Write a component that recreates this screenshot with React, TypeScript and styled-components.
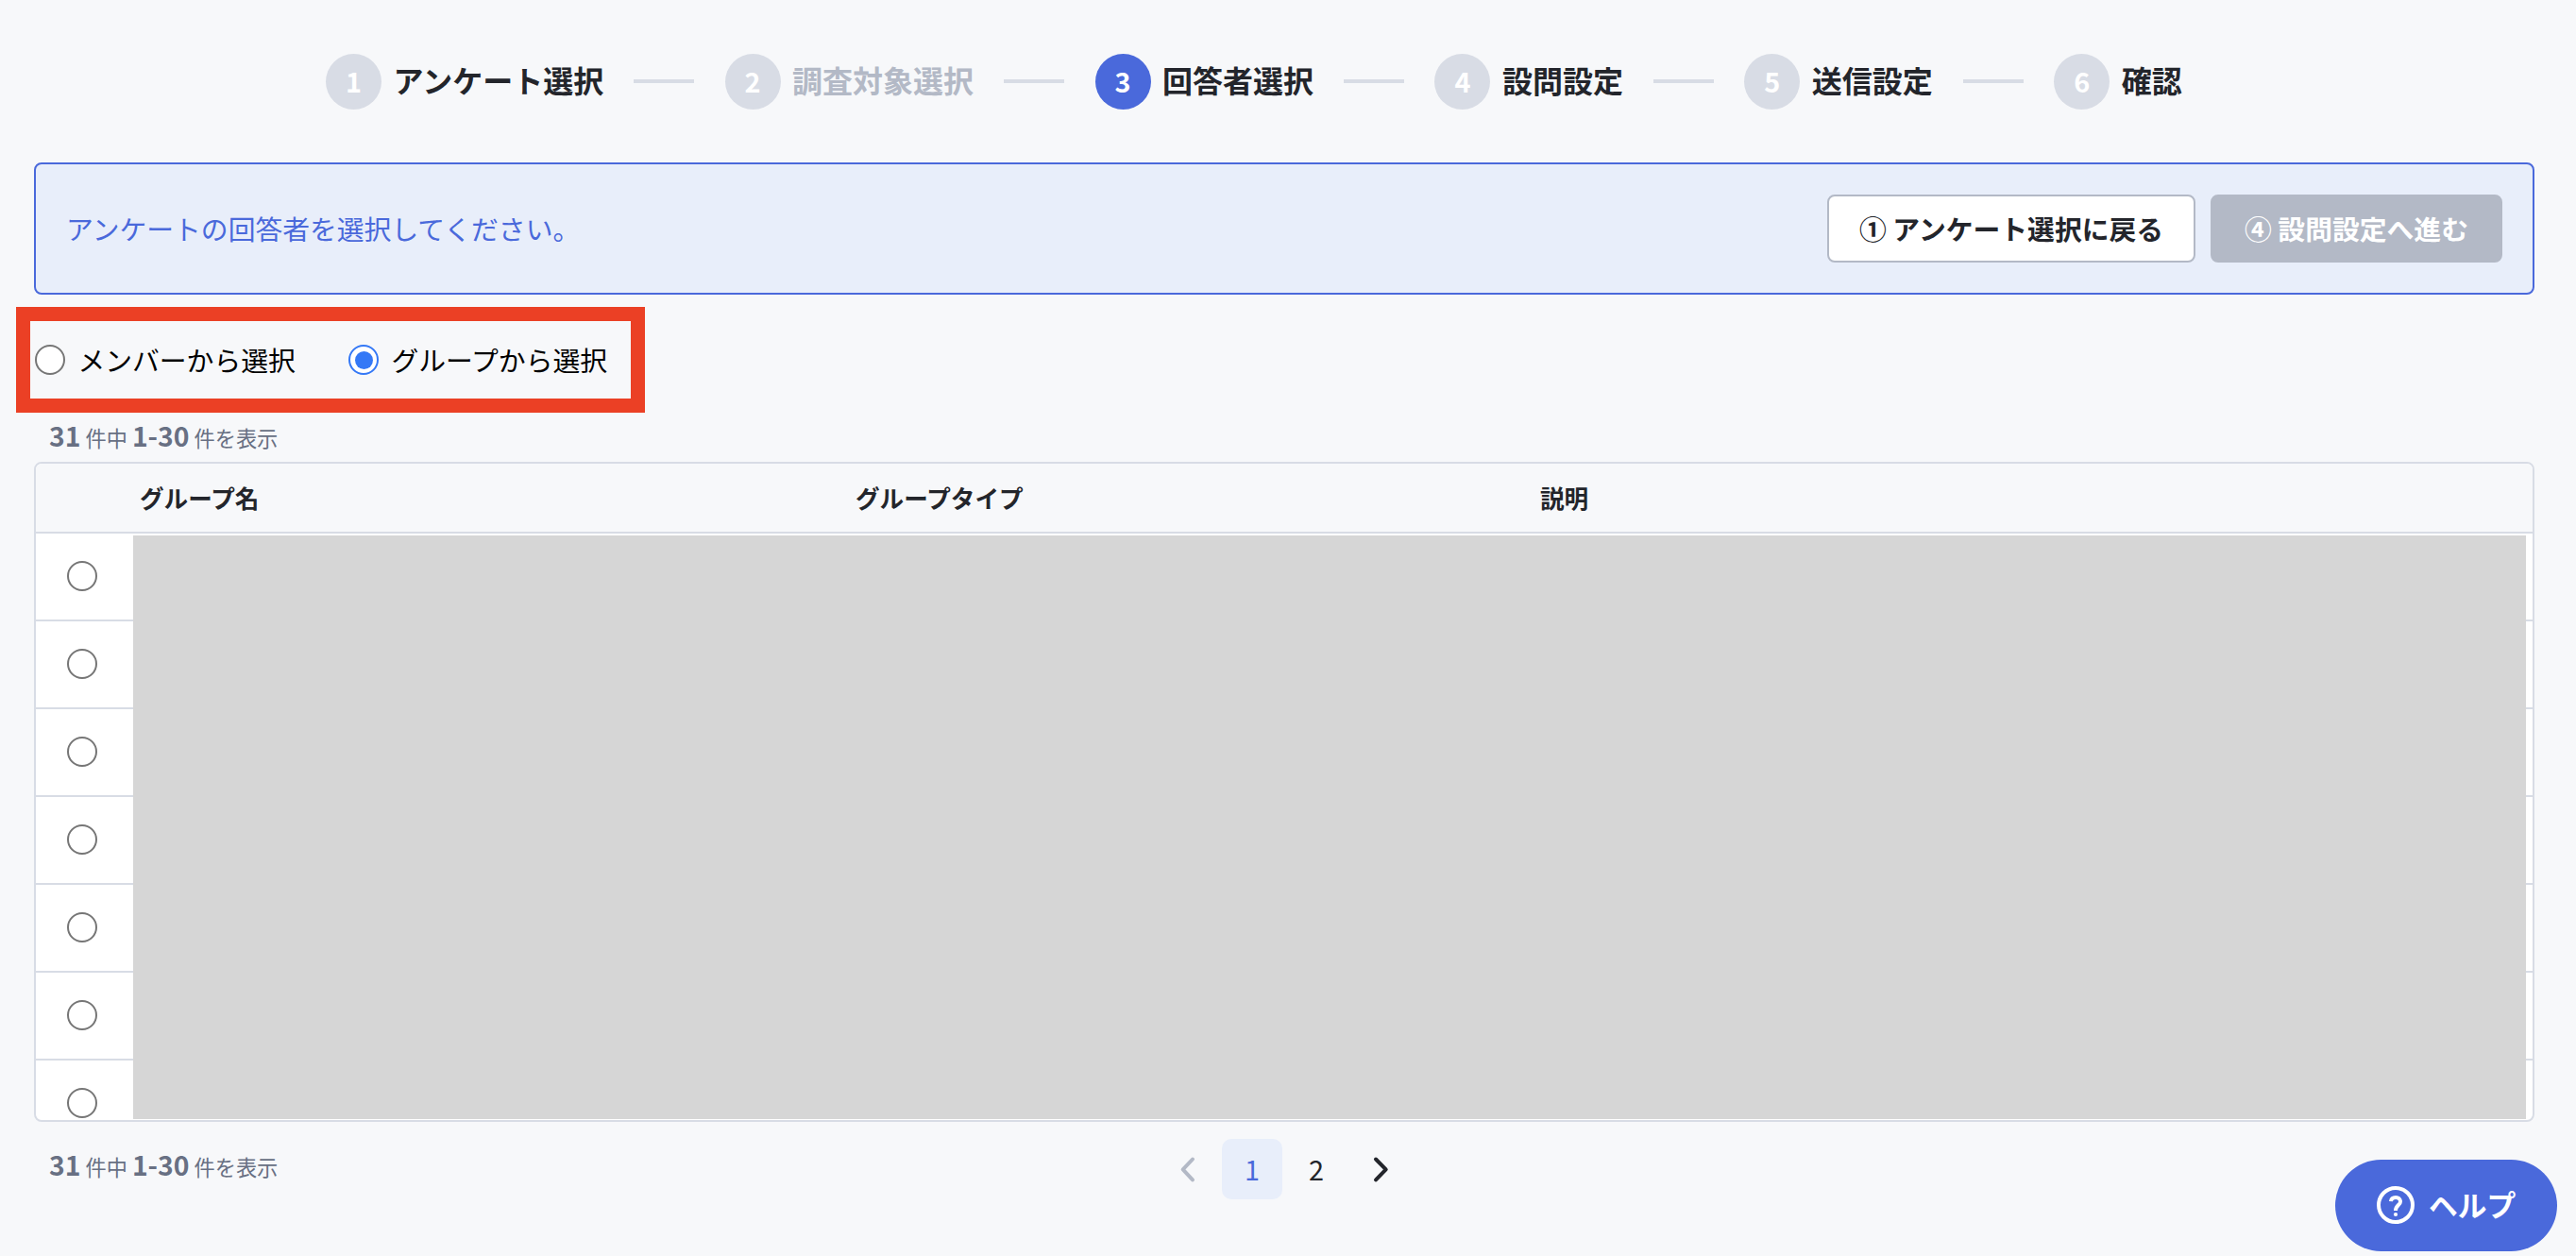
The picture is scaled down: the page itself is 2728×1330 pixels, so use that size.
import React, { useState } from 'react';
import styled, { createGlobalStyle } from 'styled-components';

const color = {
  page: '#f7f8fa',
  line: '#d8dce5',
  blue: '#4a69db',
  paleBlue: '#e8eefa',
  ink: '#23252b',
  muted: '#b3b9c6',
  count: '#687083',
};

const GlobalStyle = createGlobalStyle`
  *, *::before, *::after { box-sizing: border-box; }
  body {
    margin: 0;
    background: ${color.page};
    color: ${color.ink};
    font-family: 'Noto Sans CJK JP', 'Noto Sans', sans-serif;
    font-size: 28.8px;
  }
`;

const Page = styled.main`
  position: relative;
  height: 1330px;
  padding: 57px 44px 0 36px;
  overflow: hidden;
`;

const Steps = styled.ol`
  display: flex;
  align-items: center;
  list-style: none;
  margin: 0 0 56px;
  padding: 0 0 0 309px;
  height: 59px;
`;

const Step = styled.li<{ $dim?: boolean }>`
  display: flex;
  align-items: center;
  font-size: 32px;
  font-weight: 700;
  line-height: 54px;
  white-space: nowrap;
  color: ${(p) => (p.$dim ? color.muted : color.ink)};

  &:not(:first-child)::before {
    content: '';
    width: 64px;
    height: 4px;
    margin: -1px 32.2px 0 32.2px;
    background: ${color.line};
  }
`;

const StepNumber = styled.span<{ $active?: boolean }>`
  width: 59px;
  height: 59px;
  margin-right: 12.5px;
  border-radius: 50%;
  background: ${(p) => (p.$active ? color.blue : color.line)};
  color: #fff;
  font-size: 28.8px;
  line-height: 58px;
  text-align: center;
`;

const StepLabel = styled.span`
  padding-bottom: 5px;
`;

const Banner = styled.section`
  display: flex;
  align-items: center;
  gap: 16px;
  height: 140px;
  padding: 0 32px;
  border: 2px solid ${color.blue};
  border-radius: 8px;
  background: ${color.paleBlue};
`;

const Message = styled.p`
  flex: 1;
  margin: 0;
  padding-bottom: 2px;
  color: ${color.blue};
`;

const Button = styled.button<{ $width: number }>`
  width: ${(p) => p.$width}px;
  height: 72px;
  padding: 0 0 2px;
  border: 2px solid ${color.muted};
  border-radius: 8px;
  background: #fff;
  color: ${color.ink};
  font: inherit;
  font-weight: 700;
  white-space: nowrap;

  &:disabled {
    background: ${color.muted};
    color: #fff;
  }
`;

const Choices = styled.div`
  display: flex;
  align-items: center;
  gap: 56.6px;
  width: 666px;
  height: 112px;
  margin: 13px 0 0 -19px;
  padding-left: 5.4px;
  border: 15px solid #eb4025;
  color: #000;
`;

const Choice = styled.label`
  display: flex;
  align-items: center;
  gap: 13px;
  white-space: nowrap;
`;

const ChoiceText = styled.span`
  padding-bottom: 1px;
`;

const Radio = styled.input.attrs({ type: 'radio' })`
  appearance: none;
  flex: none;
  display: grid;
  place-items: center;
  width: 32px;
  height: 32px;
  margin: 0;
  border: 2px solid #767676;
  border-radius: 50%;
  background: #fff;

  &:checked { border-color: #3478f6; }
  &:checked::before {
    content: '';
    width: 19px;
    height: 19px;
    border-radius: 50%;
    background: #3478f6;
  }
`;

const Count = styled.p`
  display: flex;
  align-items: baseline;
  margin: 0;
  padding-left: 16px;
  height: 52px;
  line-height: 47px;
  font-size: 22.2px;
  word-spacing: 0.1px;
  color: ${color.count};
  white-space: pre;

  b { font-size: 28.3px; }
`;

const Table = styled.div`
  position: relative;
  height: 699px;
  border: 2px solid ${color.line};
  border-radius: 8px;
  background: #fff;
  overflow: hidden;
`;

const HeadRow = styled.div`
  display: grid;
  grid-template-columns: 110px 758px 725px 1fr;
  align-items: center;
  height: 74px;
  border-bottom: 2px solid ${color.line};
  background: ${color.page};
  font-size: 25.6px;
  font-weight: 700;

  span { padding-bottom: 1px; }
`;

const Row = styled.div`
  display: flex;
  align-items: flex-start;
  height: 93px;
  padding: 29px 0 0 33px;
  border-bottom: 2px solid ${color.line};
`;

const Mask = styled.div`
  position: absolute;
  top: 75.5px;
  left: 102.5px;
  right: 7.5px;
  bottom: 1px;
  background: #d6d6d6;
`;

const Footer = styled.footer`
  display: grid;
  grid-template-columns: 1fr auto 1fr;
  align-items: start;
  padding-top: 18px;

  ${Count} { padding-top: 3px; }
`;

const Pager = styled.nav`
  display: flex;
  gap: 4px;
`;

const PageItem = styled.a<{ $current?: boolean }>`
  display: flex;
  align-items: center;
  justify-content: center;
  width: 64px;
  height: 64px;
  padding-bottom: 1px;
  border-radius: 10px;
  background: ${(p) => (p.$current ? color.paleBlue : 'transparent')};
  color: ${(p) => (p.$current ? color.blue : color.ink)};
`;

const Help = styled.button`
  position: absolute;
  right: 20px;
  bottom: 5px;
  display: flex;
  align-items: center;
  gap: 15px;
  width: 235px;
  height: 97px;
  padding: 0 0 1px 44px;
  border: 0;
  border-radius: 49px;
  background: ${color.blue};
  color: #fff;
  font: inherit;
  font-size: 30.8px;
  font-weight: 700;
  white-space: nowrap;
`;

const HelpText = styled.span`
  padding-bottom: 4px;
`;

const Chevron = ({ back }: { back?: boolean }) => (
  <svg
    width="20"
    height="32"
    viewBox="0 0 20 32"
    fill="none"
    stroke={back ? color.muted : color.ink}
    strokeWidth="4"
    strokeLinecap="round"
    strokeLinejoin="round"
  >
    <path d={back ? 'M15 5.5 L4.7 16.4 L15 27.3' : 'M5 5.5 L15.7 16.4 L5 27.3'} />
  </svg>
);

const HelpIcon = () => (
  <svg width="40" height="40" viewBox="0 0 40 40" fill="none" stroke="#fff" strokeWidth="4">
    <circle cx="20" cy="20" r="18" />
    <path d="M15 16.2 C15.2 13.5 17 12 20.1 12 C23 12 25 13.8 25 16.4 C25 20 20 20.4 20 25.9" />
    <circle cx="20" cy="30" r="2.1" fill="#fff" stroke="none" />
  </svg>
);

const steps = ['アンケート選択', '調査対象選択', '回答者選択', '設問設定', '送信設定', '確認'];
const rows = [1, 2, 3, 4, 5, 6, 7];

const ResultCount = () => (
  <Count>
    <b>31</b> 件中 <b>1-30</b> 件を表示
  </Count>
);

export default function App() {
  const [source, setSource] = useState('group');
  return (
    <>
      <GlobalStyle />
      <Page>
        <Steps>
          {steps.map((label, i) => (
            <Step key={label} $dim={i === 1}>
              <StepNumber $active={i === 2}>{i + 1}</StepNumber>
              <StepLabel>{label}</StepLabel>
            </Step>
          ))}
        </Steps>
        <Banner>
          <Message>アンケートの回答者を選択してください。</Message>
          <Button $width={390}>① アンケート選択に戻る</Button>
          <Button $width={309} disabled>④ 設問設定へ進む</Button>
        </Banner>
        <Choices>
          <Choice>
            <Radio name="source" checked={source === 'member'} onChange={() => setSource('member')} />
            <ChoiceText>メンバーから選択</ChoiceText>
          </Choice>
          <Choice>
            <Radio name="source" checked={source === 'group'} onChange={() => setSource('group')} />
            <ChoiceText>グループから選択</ChoiceText>
          </Choice>
        </Choices>
        <ResultCount />
        <Table>
          <HeadRow>
            <span />
            <span>グループ名</span>
            <span>グループタイプ</span>
            <span>説明</span>
          </HeadRow>
          {rows.map((id) => (
            <Row key={id}>
              <Radio name="group" />
            </Row>
          ))}
          <Mask />
        </Table>
        <Footer>
          <ResultCount />
          <Pager>
            <PageItem><Chevron back /></PageItem>
            <PageItem $current>1</PageItem>
            <PageItem>2</PageItem>
            <PageItem><Chevron /></PageItem>
          </Pager>
        </Footer>
        <Help>
          <HelpIcon />
          <HelpText>ヘルプ</HelpText>
        </Help>
      </Page>
    </>
  );
}
